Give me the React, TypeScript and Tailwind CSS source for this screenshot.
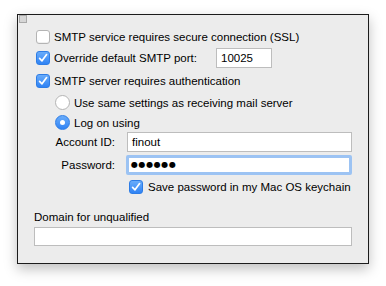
import React from 'react';

// Mail account - outgoing server options pane

const Check: React.FC<{ checked?: boolean }> = ({ checked }) =>
    checked ? (
        <span className="flex h-[14px] w-[14px] shrink-0 items-center justify-center rounded-[3px] bg-gradient-to-b from-[#69acfa] to-[#2f83f4] border border-[#2e7de6]">
            <svg width="10" height="10" viewBox="0 0 10 10">
                <path d="M1.6 5.4 L4 7.8 L8.6 1.6" fill="none" stroke="#fff" strokeWidth="1.7" strokeLinecap="round" strokeLinejoin="round" />
            </svg>
        </span>
    ) : (
        <span className="h-[14px] w-[14px] shrink-0 rounded-[3px] border border-[#b4b4b4] bg-white shadow-[inset_0_-1px_0_#f0f0f0]" />
    );

const Radio: React.FC<{ checked?: boolean }> = ({ checked }) =>
    checked ? (
        <span className="flex h-[15px] w-[15px] shrink-0 items-center justify-center rounded-full bg-gradient-to-b from-[#69acfa] to-[#2f83f4] border border-[#2e7de6]">
            <span className="h-[5px] w-[5px] rounded-full bg-white" />
        </span>
    ) : (
        <span className="h-[15px] w-[15px] shrink-0 rounded-full border border-[#b4b4b4] bg-white" />
    );

export default function App() {
    return (
        <div className="h-[286px] w-[386px] bg-white pl-[17px] pt-[14px] text-[11.5px] leading-[16px] text-black font-['Liberation_Sans',Arial,sans-serif]">
            <div className="flex h-[250px] w-[352px] flex-col border border-[#1c1c1c] bg-[#ececec] shadow-[0_5px_12px_rgba(0,0,0,0.25)]">
                {/* tiny window widget */}
                <div className="ml-px h-[8px] w-[8px] border border-[#a9a9a9] bg-[#d6d6d6]" />

                <div className="flex flex-col pl-[18px]">
                    <div className="mt-[7px] flex h-[14px] items-center gap-[4px]">
                        <Check />
                        <span>SMTP service requires secure connection (SSL)</span>
                    </div>

                    <div className="mt-[4px] flex h-[20px] items-center gap-[4px]">
                        <Check checked />
                        <span className="w-[158px]">Override default SMTP port:</span>
                        <div className="flex h-[20px] w-[56px] items-center border border-[#bdbdbd] bg-white pl-[4px]">10025</div>
                    </div>

                    <div className="mt-[6px] flex h-[14px] items-center gap-[4px]">
                        <Check checked />
                        <span>SMTP server requires authentication</span>
                    </div>

                    <div className="mt-[7px] flex h-[15px] items-center gap-[4px] pl-[19px]">
                        <Radio />
                        <span>Use same settings as receiving mail server</span>
                    </div>

                    <div className="mt-[5px] flex h-[15px] items-center gap-[4px] pl-[19px]">
                        <Radio checked />
                        <span>Log on using</span>
                    </div>

                    <div className="mt-[2px] flex h-[20px] items-center">
                        <span className="w-[79px] text-right">Account ID:</span>
                        <div className="ml-[12px] flex h-[20px] w-[225px] items-center border border-[#bdbdbd] bg-white pl-[4px]">finout</div>
                    </div>

                    <div className="mt-[3px] flex h-[20px] items-center">
                        <span className="w-[79px] text-right">Password:</span>
                        <div className="ml-[11px] flex h-[20px] w-[226px] items-center rounded-[2px] border-[3px] border-[#9cc3f3] bg-white pl-[2px]">
                            <div className="flex h-full w-full items-center text-[8px] tracking-[0.6px] font-['DejaVu_Sans',sans-serif]">●●●●●●</div>
                        </div>
                    </div>

                    <div className="mt-[5px] flex h-[14px] items-center gap-[5px] pl-[93px]">
                        <Check checked />
                        <span>Save password in my Mac OS keychain</span>
                    </div>
                </div>

                <div className="mt-[15px] pl-[16px]">Domain for unqualified</div>
                <div className="ml-[16px] mt-[2px] h-[19px] w-[318px] border border-[#bdbdbd] bg-white" />
            </div>
        </div>
    );
}
